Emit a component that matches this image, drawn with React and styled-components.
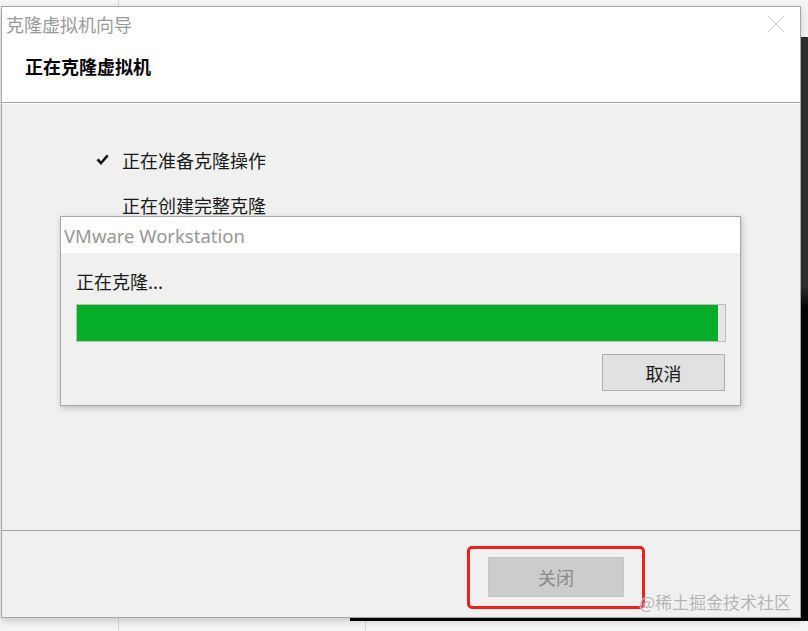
import React from 'react'
import styled, { createGlobalStyle } from 'styled-components'

const GlobalStyle = createGlobalStyle`
  html, body {
    margin: 0;
    padding: 0;
    background: #f4f4f4;
    font-family: "Noto Sans CJK SC", "Noto Sans", sans-serif;
  }
`

const Desktop = styled.div`
  position: relative;
  width: 808px;
  height: 631px;
  overflow: hidden;
  background: #f5f5f5;
`

const BackLine = styled.div`
  position: absolute;
  left: ${({ x }) => x}px;
  top: ${({ top }) => top}px;
  width: 1px;
  height: ${({ h }) => h}px;
  background: #d8d8d8;
`

const BackWindow = styled.div`
  position: absolute;
  left: 790px;
  top: 37px;
  width: 18px;
  height: 584px;
  background: linear-gradient(to bottom, #2e2e2e 0, #2e2e2e 250px, #050505 270px, #050505 100%);
`

const BackStrip = styled.div`
  position: absolute;
  left: 350px;
  top: 610px;
  width: 458px;
  height: 11px;
  background: #060606;
`

const Wizard = styled.div`
  position: absolute;
  left: 1px;
  top: 6px;
  width: 798px;
  height: 610px;
  display: flex;
  flex-direction: column;
  border: 1px solid #a5a5a5;
  background: #f0f0f0;
  box-shadow: 0 3px 8px rgba(0, 0, 0, 0.18);
`

const Head = styled.div`
  height: 95px;
  background: #fff;
  border-bottom: 1px solid #a3a3a3;
  display: flex;
  flex-direction: column;
`

const TitleRow = styled.div`
  height: 34px;
  display: flex;
  align-items: center;
  justify-content: space-between;
  padding: 0 16px 0 4px;
`

const TitleText = styled.span`
  font-size: 18px;
  color: #9a9a9a;
`

const Heading = styled.div`
  padding-left: 23px;
  margin-top: 12px;
  font-size: 18px;
  font-weight: 700;
  color: #000;
`

const Body = styled.div`
  position: relative;
  flex: 1;
  border-top: 1px solid #fff;
  padding: 43px 0 0 94px;
`

const StepList = styled.div`
  display: flex;
  flex-direction: column;
  gap: 19px;
`

const Step = styled.div`
  display: flex;
  align-items: center;
  gap: 12px;
  height: 26px;
  font-size: 18px;
  color: #1a1a1a;
`

const CheckSlot = styled.span`
  width: 14px;
  height: 14px;
  display: flex;
  align-items: center;
`

const Footer = styled.div`
  height: 87px;
  border-top: 1px solid #a3a3a3;
  display: flex;
  align-items: center;
  justify-content: flex-end;
  padding: 6px 176px 0 0;
  box-sizing: border-box;
`

const CloseButton = styled.button`
  position: relative;
  width: 136px;
  height: 40px;
  border: 1px solid #c4c4c4;
  background: #cccccc;
  color: #8a8a8a;
  font-family: inherit;
  font-size: 18px;
  padding: 0;
`

const Highlight = styled.div`
  position: absolute;
  left: -22px;
  top: -12px;
  right: -22px;
  bottom: -13px;
  border: 3px solid #f0201c;
  border-radius: 5px;
  pointer-events: none;
`

const Watermark = styled.div`
  position: absolute;
  right: 9px;
  bottom: 3px;
  font-size: 17px;
  color: #b4b4b4;
  text-shadow: 0 0 2px rgba(255, 255, 255, 0.6);
`

const Dialog = styled.div`
  position: absolute;
  left: 58px;
  top: 112px;
  width: 679px;
  height: 188px;
  display: flex;
  flex-direction: column;
  border: 1px solid #a8a8a8;
  background: #f0f0f0;
  box-shadow: 1px 2px 6px rgba(0, 0, 0, 0.22);
`

const DialogTitle = styled.div`
  height: 36px;
  background: #fff;
  display: flex;
  align-items: center;
  padding-left: 3px;
  font-family: "Noto Sans", "Open Sans", sans-serif;
  font-size: 18.5px;
  color: #979797;
`

const DialogBody = styled.div`
  flex: 1;
  display: flex;
  flex-direction: column;
  padding: 15px 14px 0 15px;
`

const DialogText = styled.div`
  font-size: 18px;
  color: #1a1a1a;
  height: 26px;
  line-height: 26px;
`

const Progress = styled.div`
  margin-top: 10px;
  height: 36px;
  border: 1px solid #bcbcbc;
  background: #e6e6e6;
`

const ProgressFill = styled.div`
  height: 100%;
  background: #06ad28;
`

const ButtonRow = styled.div`
  display: flex;
  justify-content: flex-end;
  margin-top: 12px;
  padding-right: 1px;
`

const Button = styled.button`
  width: 123px;
  height: 37px;
  border: 1px solid #adadad;
  background: #e1e1e1;
  color: #1a1a1a;
  font-family: inherit;
  font-size: 18px;
  padding: 0;
`

const CloseIcon = () => (
  <svg width="16" height="16" viewBox="0 0 16 16">
    <path d="M0.5 0.5 L15.5 15.5 M15.5 0.5 L0.5 15.5" stroke="#c8c8c8" strokeWidth="1" fill="none" />
  </svg>
)

const CheckIcon = () => (
  <svg width="13" height="12" viewBox="0 0 13 12">
    <path d="M0.5 6.2 L2.6 4.4 L5 7.2 L10.8 0.6 L12.6 2.2 L5 10.9 Z" fill="#111" />
  </svg>
)

const steps = [
  { label: '正在准备克隆操作', done: true },
  { label: '正在创建完整克隆', done: false }
]

const App = () => {
  const percent = 0.989
  return (
    <>
      <GlobalStyle />
      <Desktop>
        <BackLine x={118} top={0} h={8} />
        <BackLine x={118} top={616} h={15} />
        <BackLine x={365} top={616} h={15} />
        <BackWindow />
        <BackStrip />
        <Wizard>
          <Head>
            <TitleRow>
              <TitleText>克隆虚拟机向导</TitleText>
              <CloseIcon />
            </TitleRow>
            <Heading>正在克隆虚拟机</Heading>
          </Head>
          <Body>
            <StepList>
              {steps.map((s) => (
                <Step key={s.label}>
                  <CheckSlot>{s.done && <CheckIcon />}</CheckSlot>
                  {s.label}
                </Step>
              ))}
            </StepList>
            <Dialog>
              <DialogTitle>VMware Workstation</DialogTitle>
              <DialogBody>
                <DialogText>正在克隆...</DialogText>
                <Progress>
                  <ProgressFill style={{ width: `${percent * 100}%` }} />
                </Progress>
                <ButtonRow>
                  <Button>取消</Button>
                </ButtonRow>
              </DialogBody>
            </Dialog>
          </Body>
          <Footer>
            <CloseButton>
              关闭
              <Highlight />
            </CloseButton>
          </Footer>
          <Watermark>@稀土掘金技术社区</Watermark>
        </Wizard>
      </Desktop>
    </>
  )
}

export default App
